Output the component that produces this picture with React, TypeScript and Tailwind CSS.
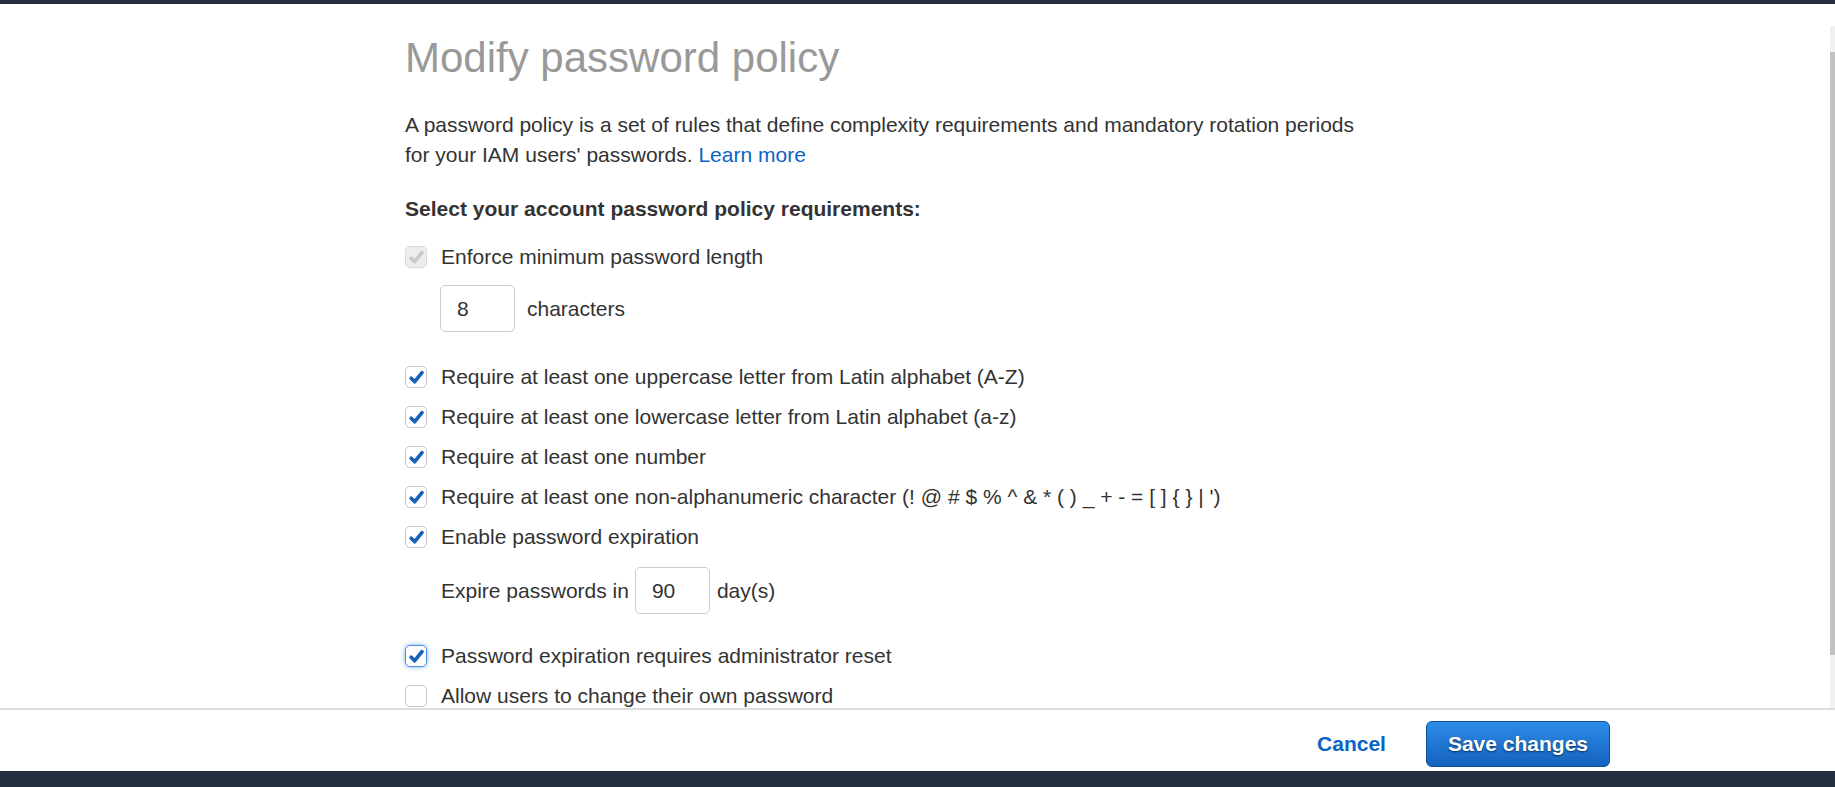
import type { ReactNode } from 'react'

type BoxState = 'checked' | 'unchecked' | 'disabled' | 'focused'

function Check({ color }: { color: string }) {
  return (
    <svg viewBox="0 0 20 20" className="w-[19px] h-[19px]">
      <path
        d="M4.4 10.8 L8.1 14.4 L15.8 4.9"
        fill="none"
        stroke={color}
        strokeWidth="3.9"
        strokeLinecap="round"
        strokeLinejoin="round"
      />
    </svg>
  )
}

function Checkbox({ state }: { state: BoxState }) {
  if (state === 'disabled') {
    return (
      <span className="w-[22px] h-[22px] rounded-[5px] border border-[#d9d9d9] bg-[#ededed] flex items-center justify-center shrink-0">
        <Check color="#c9c9c9" />
      </span>
    )
  }
  if (state === 'focused') {
    return (
      <span className="w-[22px] h-[22px] rounded-[5px] border border-[#4d90e0] bg-white shadow-[0_0_5px_#7fb1ea] flex items-center justify-center shrink-0">
        <Check color="#1762b8" />
      </span>
    )
  }
  return (
    <span className="w-[22px] h-[22px] rounded-[5px] border border-[#c8c8c8] bg-white flex items-center justify-center shrink-0">
      {state === 'checked' && <Check color="#1762b8" />}
    </span>
  )
}

function Row({ state, children }: { state: BoxState; children: ReactNode }) {
  return (
    <div className="h-[30px] flex items-center gap-[14px]">
      <Checkbox state={state} />
      <span>{children}</span>
    </div>
  )
}

function NumberBox({ value }: { value: string }) {
  return (
    <div className="w-[75px] h-[47px] rounded-[5px] border border-[#cccccc] bg-white flex items-center px-[16px] shrink-0">
      {value}
    </div>
  )
}

export default function App() {
  return (
    <div className="h-[787px] flex flex-col bg-white text-[21px] text-[#333] font-['Liberation_Sans',Arial,sans-serif]">
      <div className="h-[4px] bg-[#232f3e]" />

      <div className="h-[704px] flex">
        <main className="flex-1 overflow-hidden pl-[405px] pt-[30px]">
          <h1 className="text-[42px] leading-[48px] text-[#999]">Modify password policy</h1>

          <p className="mt-[28px] leading-[30px] max-w-[960px]">
            A password policy is a set of rules that define complexity requirements and mandatory rotation periods
            for your IAM users' passwords. <a className="text-[#0b63c4]">Learn more</a>
          </p>

          <h2 className="mt-[24px] leading-[30px] font-bold">Select your account password policy requirements:</h2>

          <div className="mt-[18px]">
            <Row state="disabled">Enforce minimum password length</Row>
          </div>
          <div className="mt-[13px] ml-[35px] flex items-center gap-[12px]">
            <NumberBox value="8" />
            <span>characters</span>
          </div>

          <div className="mt-[30px] flex flex-col gap-[10px]">
            <Row state="checked">Require at least one uppercase letter from Latin alphabet (A-Z)</Row>
            <Row state="checked">Require at least one lowercase letter from Latin alphabet (a-z)</Row>
            <Row state="checked">Require at least one number</Row>
            <Row state="checked">
              Require at least one non-alphanumeric character (! @ # $ % ^ &amp; * ( ) _ + - = [ ] {'{'} {'}'} | ')
            </Row>
            <Row state="checked">Enable password expiration</Row>
          </div>
          <div className="mt-[15px] ml-[36px] flex items-center gap-[6px]">
            <span>Expire passwords in</span>
            <NumberBox value="90" />
            <span className="ml-[1px]">day(s)</span>
          </div>

          <div className="mt-[27px] flex flex-col gap-[10px]">
            <Row state="focused">Password expiration requires administrator reset</Row>
            <Row state="unchecked">Allow users to change their own password</Row>
          </div>
        </main>

        <div className="w-[5px] mt-[22px] bg-[#f1f1f1]">
          <div className="mt-[26px] h-[603px] bg-[#c1c1c1]" />
        </div>
      </div>

      <footer className="h-[63px] border-t-2 border-[#dddddd] bg-white flex items-center pt-[7px] pl-[405px]">
        <div className="w-[1205px] flex justify-end items-center gap-[40px]">
          <button type="button" className="font-bold text-[#0b63c4]">
            Cancel
          </button>
          <button
            type="button"
            className="h-[46px] px-[21px] rounded-[6px] border border-[#0e4f9c] bg-gradient-to-b from-[#2d8ce8] to-[#1462be] text-white font-bold [text-shadow:0_1px_2px_rgba(0,0,0,0.6)]"
          >
            Save changes
          </button>
        </div>
      </footer>

      <div className="flex-1 bg-[#232f3e]" />
    </div>
  )
}
